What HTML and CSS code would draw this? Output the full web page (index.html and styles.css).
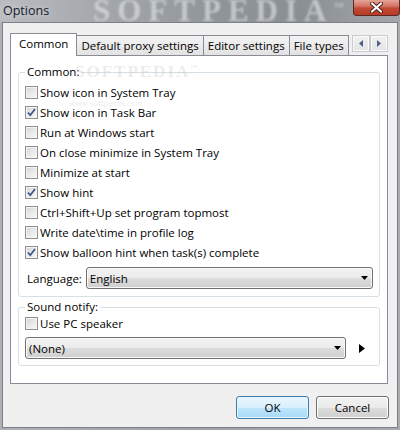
FILE: index.html
```html
<!DOCTYPE html>
<html lang="en">
<head>
    <meta charset="UTF-8">
    <title>Options</title>
    <link rel="stylesheet" href="styles.css">
</head>
<body>
    <div class="window">
        <div class="titlebar">
            <span class="title">Options</span>
            <span class="watermark">SOFTPEDIA<sup>™</sup></span>
            <div class="close">
                <svg width="13" height="11" viewBox="0 0 13 11">
                    <path d="M2 1.5 L11 9.5 M11 1.5 L2 9.5" stroke="#4a1d16" stroke-width="4" stroke-linecap="round"/>
                    <path d="M2 1.5 L11 9.5 M11 1.5 L2 9.5" stroke="#fff" stroke-width="2.2" stroke-linecap="round"/>
                </svg>
            </div>
        </div>

        <div class="client">
            <div class="tabs">
                <div class="tab active">Common</div>
                <div class="tab">Default proxy settings</div>
                <div class="tab">Editor settings</div>
                <div class="tab">File types</div>
                <div class="tab-scroll">
                    <span class="scroll-btn">
                        <svg width="4" height="7" viewBox="0 0 4 7"><polygon points="4,0 4,7 0,3.5" fill="#4d6185"/></svg>
                    </span>
                    <span class="scroll-btn">
                        <svg width="4" height="7" viewBox="0 0 4 7"><polygon points="0,0 0,7 4,3.5" fill="#4d6185"/></svg>
                    </span>
                </div>
            </div>

            <div class="panel">
                <span class="faint faint-logo">SOFTPEDIA<sup>™</sup></span>
                <span class="faint faint-url">www.softpedia.com</span>

                <fieldset class="group">
                    <legend>Common:</legend>
                    <div class="row"><span class="box"></span>Show icon in System Tray</div>
                    <div class="row"><span class="box checked"><svg width="9" height="9" viewBox="0 0 9 9"><path d="M1 4.5 L3.3 7.2 L8 1" fill="none" stroke="#3d5189" stroke-width="1.7"/></svg></span>Show icon in Task Bar</div>
                    <div class="row"><span class="box"></span>Run at Windows start</div>
                    <div class="row"><span class="box"></span>On close minimize in System Tray</div>
                    <div class="row"><span class="box"></span>Minimize at start</div>
                    <div class="row"><span class="box checked"><svg width="9" height="9" viewBox="0 0 9 9"><path d="M1 4.5 L3.3 7.2 L8 1" fill="none" stroke="#3d5189" stroke-width="1.7"/></svg></span>Show hint</div>
                    <div class="row"><span class="box"></span>Ctrl+Shift+Up set program topmost</div>
                    <div class="row"><span class="box"></span>Write date\time in profile log</div>
                    <div class="row"><span class="box checked"><svg width="9" height="9" viewBox="0 0 9 9"><path d="M1 4.5 L3.3 7.2 L8 1" fill="none" stroke="#3d5189" stroke-width="1.7"/></svg></span>Show balloon hint when task(s) complete</div>

                    <div class="field">
                        <span class="field-label">Language:</span>
                        <div class="combo">
                            <span class="combo-text">English</span>
                            <svg width="7" height="4" viewBox="0 0 7 4"><polygon points="0,0 7,0 3.5,4" fill="#000"/></svg>
                        </div>
                    </div>
                </fieldset>

                <fieldset class="group sound">
                    <legend>Sound notify:</legend>
                    <div class="row first"><span class="box"></span>Use PC speaker</div>
                    <div class="field">
                        <div class="combo sound-combo">
                            <span class="combo-text">(None)</span>
                            <svg width="7" height="4" viewBox="0 0 7 4"><polygon points="0,0 7,0 3.5,4" fill="#000"/></svg>
                        </div>
                        <svg class="play" width="6" height="9" viewBox="0 0 6 9"><polygon points="0,0 6,4.5 0,9" fill="#000"/></svg>
                    </div>
                </fieldset>
            </div>

            <div class="buttons">
                <button class="btn default">OK</button>
                <button class="btn">Cancel</button>
            </div>
        </div>
    </div>
</body>
</html>
```

FILE: styles.css
```css
body {
    margin: 0;
    width: 400px;
    height: 430px;
    overflow: hidden;
    background: linear-gradient(to right, #aeb2b6, #9fa3a8 50%, #a8acb0);
    font-family: "Open Sans", "Noto Sans", sans-serif;
    font-size: 11.5px;
    color: #000;
}
.window {
    display: flex;
    flex-direction: column;
    height: 430px;
}
.titlebar {
    position: relative;
    height: 22px;
    display: flex;
    align-items: flex-start;
    overflow: hidden;
    background: linear-gradient(to right, #b9bdc1 0%, #a4a8ad 25%, #8f9499 55%, #8a8f94 75%, #a3a7ac 100%);
}
.title {
    margin: 2px 0 0 3px;
    font-size: 12.5px;
    line-height: 17px;
    color: #15182a;
    text-shadow: 0 0 6px rgba(255, 255, 255, 0.6);
    z-index: 1;
}
.watermark {
    position: absolute;
    left: 93px;
    top: -7px;
    font-family: "Liberation Serif", serif;
    font-weight: bold;
    font-size: 31px;
    letter-spacing: 7px;
    color: rgba(228, 231, 235, 0.6);
    filter: blur(1.2px);
}
.watermark sup {
    font-size: 10px;
    letter-spacing: 0;
}
.close {
    margin-left: auto;
    width: 47px;
    height: 16px;
    box-sizing: border-box;
    border: 1px solid #5c2a23;
    border-top: none;
    border-radius: 0 0 4px 4px;
    background: linear-gradient(#e5a597 0%, #d47565 40%, #c24a35 55%, #b83b27 100%);
    display: flex;
    align-items: center;
    justify-content: center;
    z-index: 1;
}
.client {
    flex: 1;
    margin: 0 2px 2px 2px;
    border: 1px solid #7c8085;
    background: #f0f0f0;
    padding: 10px 9px 8px 7px;
    display: flex;
    flex-direction: column;
}
.tabs {
    height: 22px;
    display: flex;
    align-items: flex-end;
}
.tab {
    height: 20px;
    box-sizing: border-box;
    margin-left: -1px;
    padding: 0 4px;
    border: 1px solid #898c95;
    border-bottom: none;
    line-height: 19px;
    white-space: nowrap;
    background: linear-gradient(#f3f3f3, #ebebeb 50%, #e2e2e2);
}
.tab.active {
    position: relative;
    z-index: 1;
    height: 23px;
    margin-left: 0;
    margin-bottom: -1px;
    padding: 0 8px;
    line-height: 20px;
    background: #fff;
}
.tab-scroll {
    margin-left: auto;
    align-self: flex-start;
    margin-top: 2px;
    display: flex;
}
.scroll-btn {
    width: 18px;
    height: 17px;
    box-sizing: border-box;
    border: 1px solid #c7c9cc;
    box-shadow: inset 0 0 0 1px #fbfbfb;
    background: linear-gradient(#f1f1f1, #e4e4e4);
    display: flex;
    align-items: center;
    justify-content: center;
}
.panel {
    position: relative;
    flex: 1;
    border: 1px solid #898c95;
    background: #fff;
    padding: 8px 7px 0 7px;
}
.faint {
    position: absolute;
    color: rgba(200, 200, 200, 0.35);
    pointer-events: none;
}
.faint-logo {
    left: 64px;
    top: 6px;
    font-family: "Liberation Serif", serif;
    font-weight: bold;
    font-size: 17px;
    letter-spacing: 2px;
}
.faint-logo sup {
    font-size: 7px;
}
.faint-url {
    left: 58px;
    top: 43px;
    font-size: 8px;
    line-height: 8px;
}
.group {
    margin: 0;
    border: 1px solid #d5dfe5;
    border-radius: 3px;
    padding: 2px 6px 7px 6px;
}
.group legend {
    padding: 0 2px;
    line-height: 16px;
}
.group.sound {
    margin-top: 2px;
    padding-top: 0;
    padding-bottom: 6px;
}
.row {
    height: 20px;
    display: flex;
    align-items: center;
    white-space: nowrap;
}
.row.first {
    margin-top: -2px;
}
.box {
    width: 13px;
    height: 13px;
    box-sizing: border-box;
    margin-right: 2px;
    border: 1px solid #8e8f8f;
    box-shadow: inset 0 0 0 1px #f4f4f4;
    background: linear-gradient(135deg, #d3d4d6 0%, #ececec 60%, #f8f8f8 100%);
    display: flex;
    align-items: center;
    justify-content: center;
}
.field {
    display: flex;
    align-items: center;
    margin-top: 5px;
}
.field-label {
    margin: 0 4px 0 2px;
}
.combo {
    flex: 1;
    height: 22px;
    box-sizing: border-box;
    border: 1px solid #707070;
    border-radius: 3px;
    box-shadow: inset 0 0 0 1px #fafafa;
    background: linear-gradient(#f2f2f2 0%, #ebebeb 50%, #dddddd 51%, #cfcfcf 100%);
    padding: 0 4px 0 3px;
    display: flex;
    align-items: center;
}
.combo-text {
    flex: 1;
}
.sound .field {
    margin-top: 4px;
}
.sound-combo {
    flex: none;
    width: 321px;
}
.play {
    margin-left: 13px;
}
.buttons {
    display: flex;
    justify-content: flex-end;
    gap: 7px;
    margin-top: 12px;
    margin-right: -1px;
}
.btn {
    width: 73px;
    height: 23px;
    padding: 0;
    border: 1px solid #707070;
    border-radius: 3px;
    box-shadow: inset 0 0 0 1px #fcfcfc;
    background: linear-gradient(#f2f2f2 0%, #ebebeb 50%, #dddddd 51%, #cfcfcf 100%);
    font: inherit;
    color: #000;
}
.btn.default {
    border-color: #3c7fb1;
    box-shadow: inset 0 0 0 1px #e6f4fc;
    background: linear-gradient(#eaf6fd 0%, #d9f0fc 50%, #bee6fd 51%, #a7d9f5 100%);
}
```
